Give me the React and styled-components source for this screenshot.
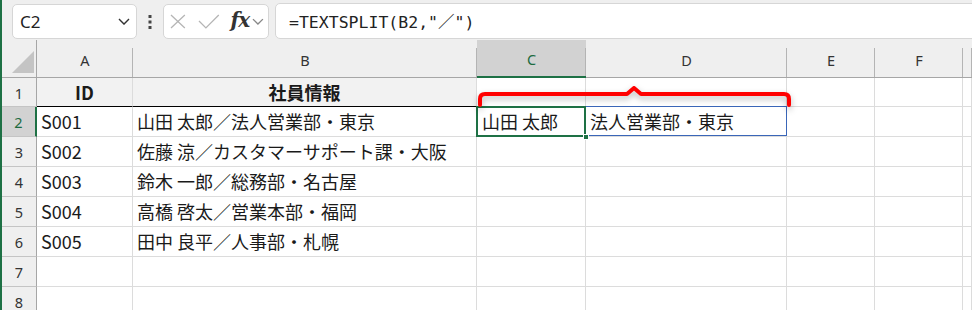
import React from 'react';
import styled, { createGlobalStyle } from 'styled-components';

const GREEN = '#1e7145';
const GRID = '#dcdcdc';
const HEAD_BG = '#efefef';
const CJK = '"Noto Sans CJK JP", "Noto Sans", sans-serif';

//#region styles
const GlobalStyle = createGlobalStyle`
    html, body {
        margin: 0;
        padding: 0;
        background: #ffffff;
        overflow: hidden;
    }
`;

const Window = styled.div`
    width: 970px;
    height: 310px;
    border-left: 2px solid ${GREEN};
    overflow: hidden;
    background: #ffffff;
`;

const Toolbar = styled.div`
    display: flex;
    align-items: flex-end;
    height: 40px;
    padding: 0 0 1px 10px;
    box-sizing: border-box;
    background: ${HEAD_BG};
`;

const NameBox = styled.div`
    display: flex;
    align-items: center;
    justify-content: space-between;
    width: 125px;
    height: 35px;
    padding: 0 6px 0 7px;
    box-sizing: border-box;
    background: #ffffff;
    border: 1px solid #d6d6d6;
    border-radius: 5px;
    font-family: "Noto Sans", sans-serif;
    font-size: 17px;
    color: #222;
`;

const Dots = styled.div`
    display: flex;
    justify-content: center;
    width: 26px;
    height: 35px;
    align-items: center;
`;

const FxBox = styled.div`
    display: flex;
    align-items: center;
    width: 106px;
    height: 35px;
    padding: 0 4px 0 6px;
    box-sizing: border-box;
    background: #ffffff;
    border: 1px solid #d6d6d6;
    border-radius: 5px;
    gap: 0;
`;

const FxLabel = styled.span`
    font-family: "DejaVu Serif", "Liberation Serif", serif;
    font-style: italic;
    font-weight: bold;
    font-size: 20px;
    color: #333;
    margin: -3px 3px 0 11px;
    letter-spacing: -1px;
`;

const FormulaInput = styled.div`
    display: flex;
    align-items: center;
    flex: 1;
    height: 34px;
    margin-left: 6px;
    margin-right: -6px;
    padding-left: 13px;
    background: #ffffff;
    border: 1px solid #d6d6d6;
    border-radius: 5px 0 0 5px;
    font-family: "DejaVu Sans Mono", "Noto Sans CJK JP", monospace;
    font-size: 16.5px;
    color: #222;
`;

const Sheet = styled.div`
    position: relative;
    display: grid;
    grid-template-columns: 35px 96px 344px 109px 201px 88px 88px 1fr;
    grid-template-rows: 38px 29px repeat(7, 30px);
`;

const ColHead = styled.div`
    position: relative;
    display: flex;
    align-items: center;
    justify-content: center;
    padding-top: 2px;
    box-sizing: border-box;
    background: ${p => (p.$active ? '#d2d2d2' : HEAD_BG)};
    border-bottom: ${p => (p.$active ? `2px solid ${GREEN}` : '1px solid #a6a6a6')};
    font-family: "Noto Sans", sans-serif;
    font-size: 14.5px;
    color: ${p => (p.$active ? '#1d6b40' : '#333')};

    &::after {
        content: '';
        position: absolute;
        right: 0;
        top: 8px;
        bottom: 0;
        width: 1px;
        background: #b4b4b4;
    }
`;

const Corner = styled(ColHead)`
    border-right: 1px solid #a6a6a6;
    &::after { display: none; }
`;

const RowHead = styled.div`
    display: flex;
    align-items: center;
    justify-content: center;
    padding-top: 1px;
    box-sizing: border-box;
    background: ${p => (p.$active ? '#d2d2d2' : HEAD_BG)};
    border-right: ${p => (p.$active ? `2px solid ${GREEN}` : '1px solid #a6a6a6')};
    border-bottom: 1px solid #c4c4c4;
    font-family: "Noto Sans", sans-serif;
    font-size: 14.5px;
    color: ${p => (p.$active ? '#1d6b40' : '#333')};
`;

const Cell = styled.div`
    position: relative;
    box-sizing: border-box;
    padding-left: ${p => (p.$center ? 0 : '4px')};
    text-align: ${p => (p.$center ? 'center' : 'left')};
    background: ${p => (p.$header ? '#f2f2f2' : '#ffffff')};
    border-right: 1px solid ${GRID};
    border-bottom: 1px solid ${p => (p.$header ? '#000' : GRID)};
    font-family: ${CJK};
    font-size: 18px;
    font-weight: ${p => (p.$header ? 'bold' : 'normal')};
    line-height: 28px;
    color: #1a1a1a;
    white-space: nowrap;
    overflow: visible;
`;

const ActiveCell = styled(Cell)`
    padding-left: 5px;
    z-index: 2;

    &::before {
        content: '';
        position: absolute;
        inset: -1px -1px -1px -1px;
        border: 2px solid ${GREEN};
        pointer-events: none;
    }
    &::after {
        content: '';
        position: absolute;
        right: -4px;
        bottom: -4px;
        width: 6px;
        height: 6px;
        background: ${GREEN};
        border: 1px solid #fff;
        box-sizing: border-box;
    }
`;

const SpillCell = styled(Cell)`
    z-index: 1;

    &::before {
        content: '';
        position: absolute;
        inset: -1px -1px 0 -1px;
        border: 1px solid #3a66b8;
        pointer-events: none;
    }
`;

const Bracket = styled.svg`
    position: absolute;
    left: 468px;
    top: 42px;
    z-index: 3;
    overflow: visible;
    filter: drop-shadow(0 3px 3px rgba(0, 0, 0, 0.28));
`;
//#endregion

const cols = ['A', 'B', 'C', 'D', 'E', 'F', ''];

const rows = [
    ['S001', '山田 太郎／法人営業部・東京'],
    ['S002', '佐藤 涼／カスタマーサポート課・大阪'],
    ['S003', '鈴木 一郎／総務部・名古屋'],
    ['S004', '高橋 啓太／営業本部・福岡'],
    ['S005', '田中 良平／人事部・札幌'],
    ['', ''],
    ['', ''],
];

const Chevron = ({ size = 12, color = '#333' }) => (
    <svg width={size} height={size * 0.6} viewBox="0 0 12 7">
        <path d="M1 1 L6 6 L11 1" fill="none" stroke={color} strokeWidth="1.4" />
    </svg>
);

const FormulaBar = () => (
    <Toolbar>
        <NameBox>
            <span>C2</span>
            <Chevron />
        </NameBox>
        <Dots>
            <svg width="4" height="14" viewBox="0 0 4 14">
                <rect x="0.5" y="0" width="3" height="3" fill="#444" />
                <rect x="0.5" y="5.5" width="3" height="3" fill="#444" />
                <rect x="0.5" y="11" width="3" height="3" fill="#444" />
            </svg>
        </Dots>
        <FxBox>
            <svg width="16" height="15" viewBox="0 0 16 15">
                <path d="M1 1 L15 14 M15 1 L1 14" stroke="#b5b5b5" strokeWidth="1.3" fill="none" />
            </svg>
            <svg width="22" height="15" viewBox="0 0 22 15" style={{ marginLeft: 12 }}>
                <path d="M1 7 L8 14 L21 1" stroke="#b5b5b5" strokeWidth="1.3" fill="none" />
            </svg>
            <FxLabel>fx</FxLabel>
            <Chevron size={12} color="#888" />
        </FxBox>
        <FormulaInput>=TEXTSPLIT(B2,"／")</FormulaInput>
    </Toolbar>
);

export default function App() {
    return (
        <Window>
            <GlobalStyle />
            <FormulaBar />
            <Sheet>
                <Corner>
                    <svg width="35" height="38" viewBox="0 0 35 38" style={{ position: 'absolute', left: 0, top: 0 }}>
                        <polygon points="32,11 32,33 10,33" fill="#c4c4c4" />
                    </svg>
                </Corner>
                {cols.map((c, i) => (
                    <ColHead key={i} $active={c === 'C'}>{c}</ColHead>
                ))}

                <RowHead>1</RowHead>
                <Cell $header $center>ID</Cell>
                <Cell $header $center>社員情報</Cell>
                <Cell /><Cell /><Cell /><Cell /><Cell />

                {rows.map((r, i) => {
                    const n = i + 2;
                    return (
                        <React.Fragment key={n}>
                            <RowHead $active={n === 2}>{n}</RowHead>
                            <Cell>{r[0]}</Cell>
                            <Cell>{r[1]}</Cell>
                            {n === 2 ? (
                                <>
                                    <ActiveCell>山田 太郎</ActiveCell>
                                    <SpillCell>法人営業部・東京</SpillCell>
                                </>
                            ) : (
                                <><Cell /><Cell /></>
                            )}
                            <Cell /><Cell /><Cell />
                        </React.Fragment>
                    );
                })}

                <Bracket width="324" height="26" viewBox="0 0 324 26">
                    <path
                        d="M10 23 L10 17 Q10 12 15 12 L157 12 L164 6 L171 12 L314 12 Q319 12 319 17 L319 23"
                        fill="none"
                        stroke="#ff0000"
                        strokeWidth="4"
                        strokeLinejoin="round"
                        strokeLinecap="round"
                    />
                </Bracket>
            </Sheet>
        </Window>
    );
}
